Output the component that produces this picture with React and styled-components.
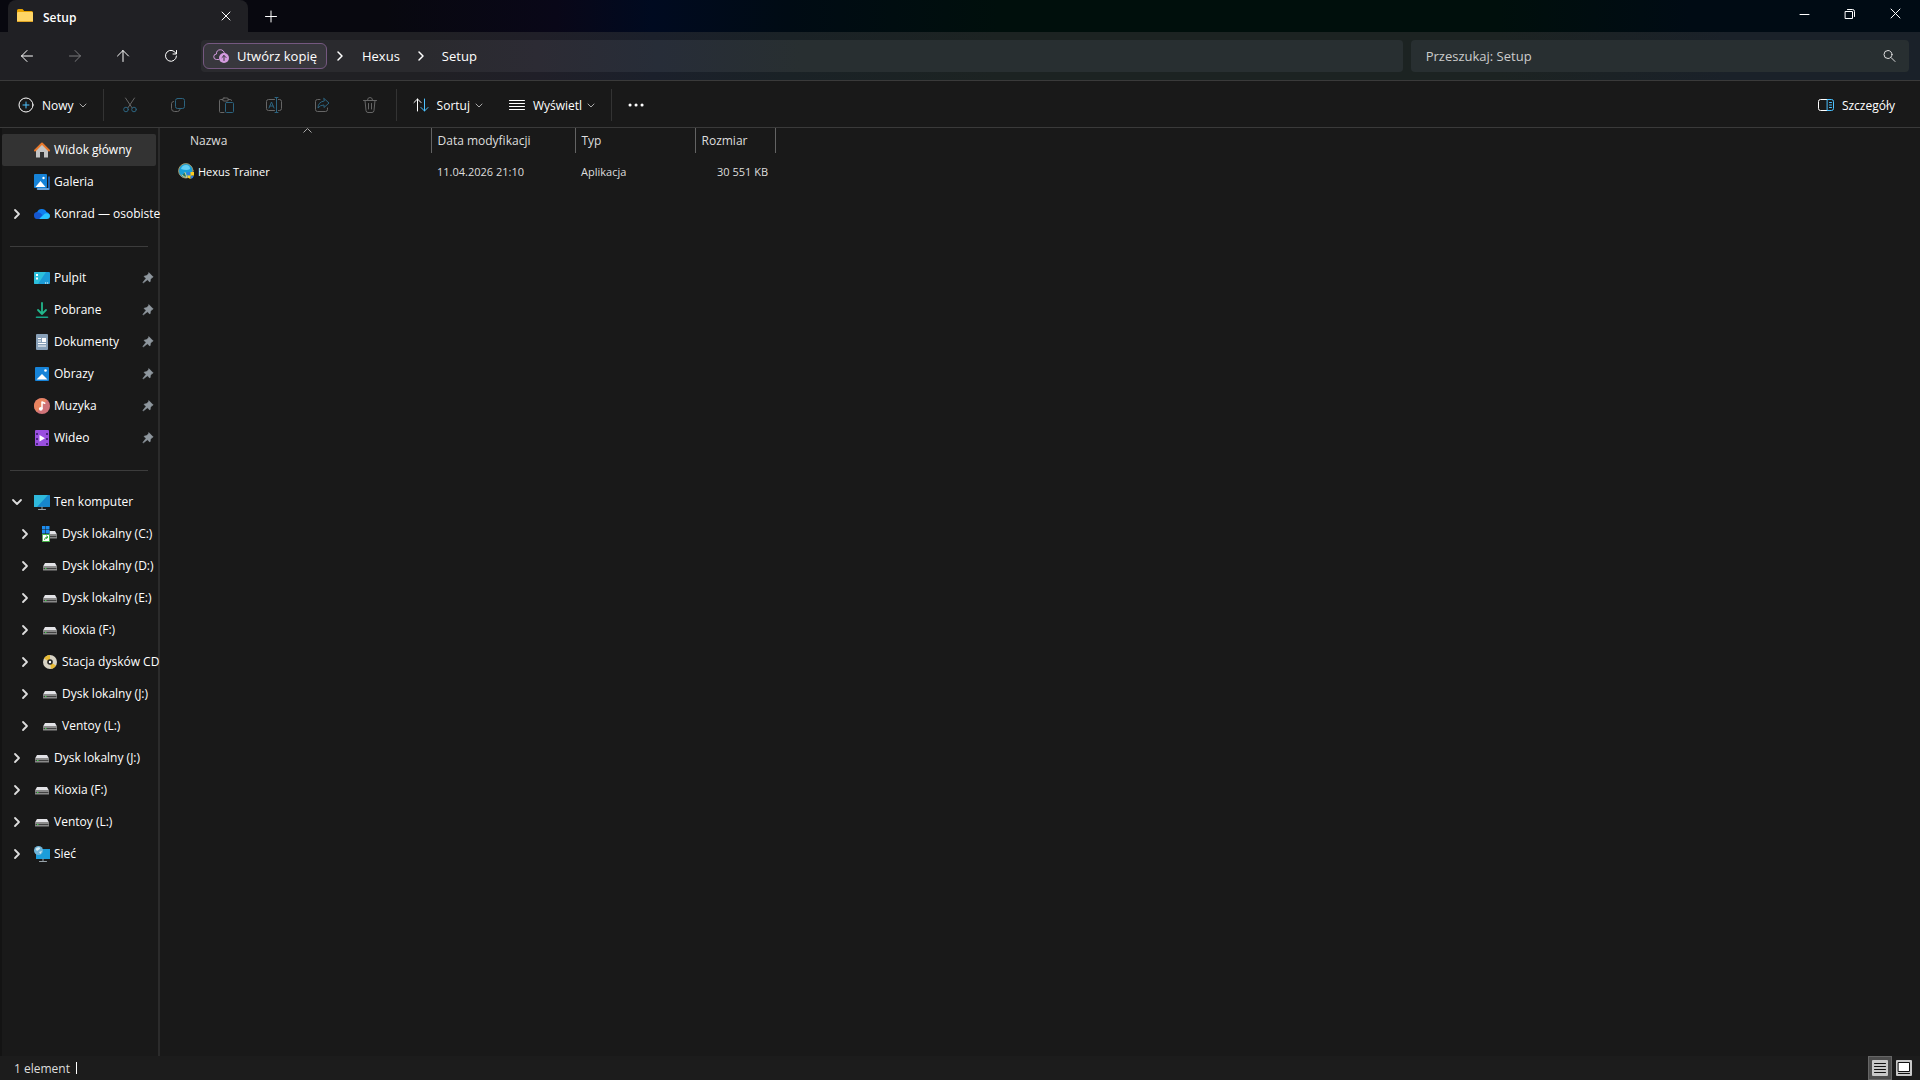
import styled, { createGlobalStyle } from "styled-components";

const GlobalStyle = createGlobalStyle`
  * {
    box-sizing: border-box;
  }

  body {
    margin: 0;
    background: #191919;
    color: #fff;
    font-family: "Open Sans", "Noto Sans", sans-serif;
    font-size: 12px;
  }

  button,
  input {
    font: inherit;
    color: inherit;
  }
`;

const Window = styled.div`
  display: flex;
  flex-direction: column;
  height: 100vh;
  overflow: hidden;
`;

const TitleBar = styled.header`
  display: flex;
  height: 32px;
  padding-left: 8px;
  background: linear-gradient(90deg, #08080f 0%, #08080f 20%, #090718 29%, #000a20 34%, #000b14 41%, #000f0c 52%, #000f0c 78%, #000b14 88%, #000b14 100%);
`;

const WindowTab = styled.div`
  display: flex;
  align-items: center;
  width: 240px;
  padding: 0 6px 0 9px;
  border-radius: 8px 8px 0 0;
  background: #202024;
`;

const TabTitle = styled.span`
  flex: 1;
  margin-left: 10px;
  padding-top: 2px;
  font-weight: 600;
`;

const PlainButton = styled.button`
  display: flex;
  align-items: center;
  justify-content: center;
  width: ${(props) => props.$width || 32}px;
  height: ${(props) => props.$height || 32}px;
  padding: 0;
  border: 0;
  background: none;
  opacity: ${(props) => (props.disabled ? 0.4 : 1)};
`;

const WindowButtons = styled.div`
  display: flex;
  margin-left: auto;
`;

const NavBar = styled.nav`
  display: flex;
  align-items: center;
  height: 49px;
  padding: 0 11px 0 3px;
  border-bottom: 1px solid #3a3a3a;
  background: linear-gradient(90deg, #202024 0%, #202024 22%, #201f28 28%, #1b202b 34%, #1a2226 41%, #1c2322 52%, #1c2322 78%, #1a2129 90%, #1a2129 100%);
`;

const AddressBar = styled.div`
  display: flex;
  flex: 28;
  align-items: center;
  height: 32px;
  margin-left: 6px;
  padding-left: 2px;
  border-radius: 4px;
  background: linear-gradient(90deg, #2a2a2e 0%, #2a2a2e 18%, #2c2b34 28%, #272d38 38%, #282f31 50%, #282f31 100%);
  font-size: 13px;
`;

const CopyButton = styled.button`
  display: flex;
  align-items: center;
  gap: 8px;
  height: 26px;
  padding: 0 9px;
  border: 1px solid #755880;
  border-radius: 6px;
  background: #38373d;
`;

const Crumb = styled.a`
  padding: 0 8px;
  color: #fff;
  text-decoration: none;
`;

const SearchBox = styled.label`
  display: flex;
  flex: 11;
  align-items: center;
  height: 32px;
  margin-left: 8px;
  padding: 0 12px 0 15px;
  border-radius: 4px;
  background: #282f31;
`;

const SearchInput = styled.input`
  flex: 1;
  min-width: 0;
  padding: 0;
  border: 0;
  outline: 0;
  background: none;
  font-size: 13px;

  &::placeholder {
    color: #ccc;
    opacity: 1;
  }
`;

const CommandBar = styled.div`
  display: flex;
  align-items: center;
  height: 47px;
  padding: 2px 8px 0;
  border-bottom: 1px solid #3a3a3a;
`;

const CommandButton = styled.button`
  display: flex;
  align-items: center;
  height: 32px;
  margin-right: 4px;
  padding: 0 10px;
  border: 0;
  background: none;
  font-weight: 500;
`;

const CommandLabel = styled.span`
  margin: 0 3px 0 8px;
`;

const CommandDivider = styled.span`
  width: 1px;
  height: 32px;
  margin-left: ${(props) => props.$before || 0}px;
  margin-right: ${(props) => props.$after || 0}px;
  background: #333;
`;

const Details = styled.div`
  margin-left: auto;
`;

const Body = styled.div`
  display: flex;
  flex: 1;
  min-height: 0;
`;

const Sidebar = styled.aside`
  width: 160px;
  padding-top: 6px;
  border-left: 2px solid #131313;
  border-right: 2px solid #2b2b2b;
`;

const TreeRow = styled.a`
  display: flex;
  align-items: center;
  height: 32px;
  margin-right: 2px;
  padding-left: ${(props) => (props.$nested ? 17 : 9)}px;
  padding-right: 2px;
  border-radius: 2px;
  background: ${(props) => (props.$active ? "#333" : "none")};
  color: #fff;
  text-decoration: none;
  white-space: nowrap;

  svg {
    flex: none;
  }
`;

const Arrow = styled.span`
  display: flex;
  flex: none;
  justify-content: center;
  width: 12px;
  margin-right: 11px;
`;

const RowLabel = styled.span`
  flex: 1;
  min-width: 0;
  margin-left: 4px;
  padding-bottom: 2px;
`;

const TreeDivider = styled.hr`
  height: 1px;
  margin: 16px 10px 15px 8px;
  border: 0;
  background: #3c3c3c;
`;

const Main = styled.main`
  flex: 1;
`;

const FileTable = styled.table`
  border-collapse: collapse;
  table-layout: fixed;
  width: 615px;
`;

const HeadCell = styled.th`
  position: relative;
  width: ${(props) => props.$width}px;
  height: 25px;
  padding: 0 0 0 ${(props) => props.$indent || 6}px;
  border-right: 1px solid #636363;
  color: #dedede;
  font-weight: 400;
  text-align: left;
`;

const SortMark = styled.svg`
  position: absolute;
  top: 0;
  left: calc(50% + 8px);
`;

const Cell = styled.td`
  height: 36px;
  padding: 0 7px 0 6px;
  color: ${(props) => (props.$name ? "#fff" : "#dedede")};
  font-size: 11px;
  text-align: ${(props) => (props.$right ? "right" : "left")};
`;

const FileName = styled.span`
  display: flex;
  align-items: center;
  gap: 4px;
  padding-left: 12px;
`;

const StatusBar = styled.footer`
  display: flex;
  align-items: center;
  height: 24px;
  padding: 0 4px 0 14px;
  background: #1c1c1c;
  color: #dedede;
`;

const StatusDivider = styled.span`
  width: 1px;
  height: 12px;
  margin-left: 6px;
  background: #fff;
`;

const ViewButtons = styled.div`
  display: flex;
  margin-left: auto;
`;

const ViewButton = styled.button`
  display: flex;
  align-items: center;
  justify-content: center;
  width: 24px;
  height: 24px;
  padding: 0;
  border: 1px solid ${(props) => (props.$active ? "#666" : "transparent")};
  background: ${(props) => (props.$active ? "#4d4d4d" : "none")};
`;

const Glyph = ({ size = 16, color = "#fff", children }) => (
  <svg width={size} height={size} viewBox={`0 0 ${size} ${size}`} fill="none" stroke={color} strokeLinecap="round" strokeLinejoin="round" aria-hidden="true">
    {children}
  </svg>
);

const Chevron = ({ down, color = "#ddd", width = 1.5 }) => (
  <Glyph size={12} color={color}>
    <path d={down ? "M2 4l4 4 4-4" : "M4 2l4 4-4 4"} strokeWidth={width} />
  </Glyph>
);

const MenuArrow = () => (
  <Glyph size={12} color="#aaa">
    <path d="M3 5l3 3 3-3" />
  </Glyph>
);

const FolderIcon = () => (
  <Glyph>
    <path d="M0 2.500q0-1.500 1.500-1.500h4l1.700 2H14.500q1.500 0 1.500 1.500V12H0z" fill="#e8a200" stroke="none" />
    <rect y="4" width="16" height="10" rx="1.200" fill="#ffd566" stroke="none" />
    <path d="M.5 13.500h15" stroke="#e0a526" />
  </Glyph>
);

const HomeIcon = () => (
  <Glyph>
    <path d="M2 8l6-6 6 6v7.500h-4V10H6v5.500H2z" fill="#c4c4c4" stroke="none" />
    <path d="M1 8.500l7-7 7 7" stroke="#e8792c" strokeWidth="2" />
  </Glyph>
);

const GalleryIcon = () => (
  <Glyph>
    <path d="M3.500 15h11.500V2.500" stroke="#1b5fae" strokeWidth="2" strokeLinecap="butt" />
    <path d="M3.500 15h11" stroke="#7fb6e8" strokeWidth="1.500" />
    <rect width="13" height="14" rx="1" fill="#1683d8" stroke="none" />
    <path d="M1.500 13l5-6 5 6z" fill="#fff" stroke="none" />
    <circle cx="9.500" cy="4" r="1.200" fill="#fff" stroke="none" />
  </Glyph>
);

const PictureIcon = () => (
  <Glyph>
    <rect x="1" y="1" width="14" height="14" rx="1" fill="#1683d8" stroke="none" />
    <path d="M2.500 13.500L8 8l5.500 5.500z" fill="#fff" stroke="none" />
    <circle cx="11.500" cy="4.500" r="1.300" fill="#fff" stroke="none" />
  </Glyph>
);

const CloudIcon = () => (
  <Glyph>
    <path d="M3.500 13A3.500 3.500 0 0 1 3 6.200 5.200 5.200 0 0 1 12.600 6 3.600 3.600 0 0 1 12.500 13z" fill="#0f7ff0" stroke="none" />
    <path d="M5 13l6-5.500q5-.8 5 2.500 0 3-3.500 3z" fill="#28c2ff" stroke="none" />
    <path d="M3 6.300q3-.8 5.500 2.700L5 13H3.500Q0 13 0 9.500T3 6.300z" fill="#1657d0" stroke="none" />
  </Glyph>
);

const DesktopIcon = () => (
  <Glyph>
    <rect y="2" width="16" height="12" rx="1" fill="#1b9bd7" stroke="none" />
    <path d="M0 3q0-1 1-1h11L4 14H1q-1 0-1-1z" fill="#2cc0dc" stroke="none" />
    <path d="M2 4h2v2H2zM2 7.500h2v2H2zM11 12.500h1.200v1H11zM13 12.500h1.200v1H13z" fill="#fff" stroke="none" />
  </Glyph>
);

const DownloadIcon = () => (
  <Glyph>
    <path d="M8 1v11M4 8l4 4 4-4" stroke="#22b78c" strokeWidth="1.800" />
    <path d="M2.500 15.200h11" stroke="#17a589" strokeWidth="1.600" />
  </Glyph>
);

const DocumentIcon = () => (
  <Glyph>
    <rect x="2" width="12" height="16" rx="1" fill="#88a0b8" stroke="none" />
    <path d="M4 4.500h3M4 7h3M4 9.500h8M4 12h8" stroke="#fff" strokeLinecap="butt" />
    <path d="M8 4h4v4H8z" fill="#fff" stroke="none" />
  </Glyph>
);

const MusicIcon = () => (
  <Glyph>
    <circle cx="8" cy="8" r="8" fill="#d07378" stroke="none" />
    <path d="M0 8a8 8 0 0 1 13-6L3 14A8 8 0 0 1 0 8z" fill="#e8845f" stroke="none" />
    <circle cx="6.800" cy="10.800" r="1.900" fill="#fff" stroke="none" />
    <path d="M8 10.500V4l2.800 1.200" stroke="#fff" strokeWidth="1.500" />
  </Glyph>
);

const VideoIcon = () => (
  <Glyph>
    <rect x="1" width="14" height="16" rx="1" fill="#9a4fe0" stroke="none" />
    <path d="M3 3v12M13 3v12" stroke="#4a2380" strokeWidth="2" strokeDasharray="2 3" strokeLinecap="butt" />
    <path d="M5.500 5v6.500L11 8.200z" fill="#fff" stroke="none" />
  </Glyph>
);

const ComputerIcon = () => (
  <Glyph>
    <rect y="1" width="16" height="12" rx=".5" fill="#1787cd" stroke="none" />
    <path d="M0 1h14L3 13H0z" fill="#2fb9dc" stroke="none" />
    <path d="M8 13v2M4.500 15.500h7" stroke="#98a3aa" />
  </Glyph>
);

const DriveShape = () => (
  <>
    <path d="M3 5h10l2 3.500H1z" fill="#e2e2e6" stroke="none" />
    <rect x="1" y="8" width="14" height="4.500" rx=".5" fill="#8a8a8a" stroke="none" />
    <path d="M2 10.500h12" stroke="#404040" />
    <path d="M3.500 10.500h.5" stroke="#41e04b" />
  </>
);

const DriveIcon = () => (
  <Glyph>
    <DriveShape />
  </Glyph>
);

const SystemDriveIcon = () => (
  <Glyph>
    <DriveShape />
    <path d="M0 0h7.500v8H0z" fill="#191919" stroke="none" />
    <path d="M0 0h3.500v3.500H0zM4 0h3.500v3.500H4zM0 4h3.500v3.500H0zM4 4h3.500v3.500H4z" fill="#1d8df0" stroke="none" />
    <rect x=".5" y="8.500" width="7" height="7" fill="#fff" stroke="#45b549" />
    <path d="M2.500 13.500q0-2.500 3-2.500M4.500 10l1.500 1.200-1.500 1.300" stroke="#2e9f36" />
  </Glyph>
);

const DiscIcon = () => (
  <Glyph>
    <circle cx="8" cy="8" r="7" fill="#d8d3c4" stroke="none" />
    <path d="M8 8L2 4.500A7 7 0 0 1 8 1zM8 8l6 3.500A7 7 0 0 1 9 15z" fill="#e8bb35" stroke="none" />
    <circle cx="8" cy="8" r="2.800" fill="#222" stroke="none" />
    <circle cx="8" cy="8" r="1.200" fill="#fff" stroke="none" />
  </Glyph>
);

const NetworkIcon = () => (
  <Glyph>
    <path d="M2 3h14v10H2z" fill="#1c9ddb" stroke="none" />
    <path d="M9 13v2M5.500 15.500h7" stroke="#98a3aa" />
    <circle cx="4.500" cy="4.500" r="4.500" fill="#6fb4d8" stroke="none" />
    <path d="M1.500 3q2-2.500 4-1.500T3 5zM5 6l3-1-1.500 3z" fill="#d5ebf4" stroke="none" />
  </Glyph>
);

const AppIcon = () => (
  <Glyph>
    <circle cx="7.800" cy="7.800" r="7.200" fill="#189fd8" stroke="#a39768" />
    <path d="M3 6q1-4 5-4t4 4q-3 2-9 0z" fill="#63d0f5" stroke="none" />
    <path d="M4 12q2 2.500 5 2.500L7 9.500" fill="#267a65" stroke="#d8cf9a" />
    <path d="M9 9h3.500v3.500H9zM12.500 12.500H16q-.5 2.500-3.500 3.500z" fill="#2f7fe0" stroke="none" />
    <path d="M12.500 9H16v3.500h-3.500zM9 12.500h3.500V16Q9.500 15 9 12.500z" fill="#ffce1f" stroke="none" />
  </Glyph>
);

const PinIcon = () => (
  <Glyph size={12}>
    <path d="M7 .8l4.200 4.200-1.200.5L8.500 7.300 8 10 5.300 7.800 1.500 10.800.8 10.500 4 6.500 2 4.300 4.800 3.500 6.300 2z" fill="#8f979e" stroke="#8f979e" strokeWidth=".6" />
  </Glyph>
);

const pinned = [
  { name: "Pulpit", icon: DesktopIcon },
  { name: "Pobrane", icon: DownloadIcon },
  { name: "Dokumenty", icon: DocumentIcon },
  { name: "Obrazy", icon: PictureIcon },
  { name: "Muzyka", icon: MusicIcon },
  { name: "Wideo", icon: VideoIcon },
];

const devices = [
  { name: "Dysk lokalny (C:)", icon: SystemDriveIcon, nested: true },
  { name: "Dysk lokalny (D:)", icon: DriveIcon, nested: true },
  { name: "Dysk lokalny (E:)", icon: DriveIcon, nested: true },
  { name: "Kioxia (F:)", icon: DriveIcon, nested: true },
  { name: "Stacja dysków CD", icon: DiscIcon, nested: true },
  { name: "Dysk lokalny (J:)", icon: DriveIcon, nested: true },
  { name: "Ventoy (L:)", icon: DriveIcon, nested: true },
  { name: "Dysk lokalny (J:)", icon: DriveIcon },
  { name: "Kioxia (F:)", icon: DriveIcon },
  { name: "Ventoy (L:)", icon: DriveIcon },
  { name: "Sieć", icon: NetworkIcon },
];

const TreeItem = ({ name, icon: Icon, arrow, active, nested, pin }) => (
  <TreeRow href="#" $active={active} $nested={nested}>
    <Arrow>{arrow && <Chevron down={arrow === "down"} width={1.8} />}</Arrow>
    <Icon />
    <RowLabel>{name}</RowLabel>
    {pin && <PinIcon />}
  </TreeRow>
);

const App = () => {
  return (
    <Window>
      <GlobalStyle />
      <TitleBar>
        <WindowTab>
          <FolderIcon />
          <TabTitle>Setup</TabTitle>
          <PlainButton aria-label="Zamknij kartę">
            <Glyph><path d="M4 4l8 8M12 4l-8 8" /></Glyph>
          </PlainButton>
        </WindowTab>
        <PlainButton aria-label="Nowa karta" $width={46}>
          <Glyph><path d="M2.500 8.500h11M8 3v11" /></Glyph>
        </PlainButton>
        <WindowButtons>
          <PlainButton aria-label="Minimalizuj" $width={46} $height={28}>
            <Glyph><path d="M3 8.500h9" /></Glyph>
          </PlainButton>
          <PlainButton aria-label="Przywróć" $width={44} $height={28}>
            <Glyph><path d="M3.500 5.500h7v7h-7zM5.500 3.500h5q2 0 2 2v5" /></Glyph>
          </PlainButton>
          <PlainButton aria-label="Zamknij" $width={48} $height={28}>
            <Glyph><path d="M3 3l9 9M12 3l-9 9" /></Glyph>
          </PlainButton>
        </WindowButtons>
      </TitleBar>

      <NavBar>
        <PlainButton aria-label="Wstecz" $width={48}>
          <Glyph><path d="M13.500 8h-11M8 2.500L2.500 8 8 13.500" /></Glyph>
        </PlainButton>
        <PlainButton aria-label="Dalej" $width={48} disabled>
          <Glyph><path d="M2.500 8h11M8 2.500L13.500 8 8 13.500" /></Glyph>
        </PlainButton>
        <PlainButton aria-label="W górę" $width={48}>
          <Glyph><path d="M8 13.500v-11M2.500 8L8 2.500 13.500 8" /></Glyph>
        </PlainButton>
        <PlainButton aria-label="Odśwież" $width={48}>
          <Glyph><path d="M13 5.500A5.500 5.500 0 1 0 13.500 8M13.500 2.500v3.500H10" /></Glyph>
        </PlainButton>
        <AddressBar>
          <CopyButton>
            <Glyph color="#d59be0">
              <path d="M5.500 11.500h-2a2.700 2.700 0 0 1 0-5.500 4 4 0 0 1 8-.5" />
              <circle cx="11" cy="10" r="5" fill="#d59be0" stroke="none" />
              <path d="M11 12.500v-5M9 9.500l2-2 2 2" stroke="#38373d" />
            </Glyph>
            Utwórz kopię
          </CopyButton>
          <PlainButton aria-label="Rozwiń" $width={27}><Chevron color="#fff" /></PlainButton>
          <Crumb href="#">Hexus</Crumb>
          <PlainButton aria-label="Rozwiń Hexus" $width={26}><Chevron color="#fff" /></PlainButton>
          <Crumb href="#">Setup</Crumb>
        </AddressBar>
        <SearchBox>
          <SearchInput type="search" placeholder="Przeszukaj: Setup" aria-label="Przeszukaj: Setup" />
          <Glyph color="#ddd"><circle cx="7" cy="6.500" r="4" /><path d="M10 9.500l4 4" /></Glyph>
        </SearchBox>
      </NavBar>

      <CommandBar>
        <CommandButton>
          <Glyph><circle cx="8" cy="8" r="7" /><path d="M8 5v6M5 8h6" stroke="#4cc2ff" /></Glyph>
          <CommandLabel>Nowy</CommandLabel>
          <MenuArrow />
        </CommandButton>
        <CommandDivider $after={2} />
        <PlainButton aria-label="Wytnij" $width={48}>
          <Glyph color="#666"><path d="M3.500 1l6.700 10M12.500 1L5.800 11" /><g stroke="#2c6480"><circle cx="4" cy="12.500" r="2.300" /><circle cx="12" cy="12.500" r="2.300" /></g></Glyph>
        </PlainButton>
        <PlainButton aria-label="Kopiuj" $width={48}>
          <Glyph color="#666"><path d="M3.500 4.500q-2 .5-2 2v5q0 3 3 3h3q2 0 2.500-2" /><rect x="5.500" y="1.500" width="9" height="10" rx="2" stroke="#2c6480" /></Glyph>
        </PlainButton>
        <PlainButton aria-label="Wklej" $width={48}>
          <Glyph color="#666"><path d="M5 2.500H2.500q-1 0-1 1v11q0 1 1 1H6M10 2.500h2.500q1 0 1 1" /><rect x="4.500" y="1" width="6" height="3" rx="1.500" /><rect x="7.500" y="5.500" width="8" height="10" rx="1" stroke="#2c6480" /></Glyph>
        </PlainButton>
        <PlainButton aria-label="Zmień nazwę" $width={48}>
          <Glyph color="#666"><path d="M8.500 2.500h-6q-2 0-2 2v7q0 2 2 2h6M12.500 2.500h1q2 0 2 2v7q0 2-2 2h-1" /><path d="M3 11l2.500-6L8 11M4 9h3M10.500 1v14M9 .5h3M9 15.500h3" stroke="#2c6480" /></Glyph>
        </PlainButton>
        <PlainButton aria-label="Udostępnij" $width={48}>
          <Glyph color="#666"><path d="M6 2.500H3.500q-2 0-2 2v8q0 2 2 2h8q2 0 2-2V11" /><path d="M10 1.500L15 6l-5 4.500V8q-4 0-6 3 0-6 6-7z" stroke="#2c6480" /></Glyph>
        </PlainButton>
        <PlainButton aria-label="Usuń" $width={48}>
          <Glyph color="#666"><path d="M1.500 3.500h13M5.500 3q0-2.500 2.500-2.500T10.500 3M3 3.500l1 10q.2 2 2 2h4q1.800 0 2-2l1-10M6.500 6.500v5.500M9.500 6.500v5.500" /></Glyph>
        </PlainButton>
        <CommandDivider $before={2} $after={6} />
        <CommandButton>
          <Glyph><path d="M4.500 14V2M1 5.500L4.500 2 8 5.500" /><path d="M11.500 2v12M8 10.500l3.500 3.500 3.500-3.500" stroke="#4cc2ff" /></Glyph>
          <CommandLabel>Sortuj</CommandLabel>
          <MenuArrow />
        </CommandButton>
        <CommandButton>
          <Glyph><path d="M.5 3.500h15M.5 6.500h15M.5 9.500h15M.5 12.500h15" /></Glyph>
          <CommandLabel>Wyświetl</CommandLabel>
          <MenuArrow />
        </CommandButton>
        <CommandDivider $after={8} />
        <PlainButton aria-label="Więcej">
          <Glyph><path d="M2 8h.1M8 8h.1M14 8h.1" strokeWidth="3" /></Glyph>
        </PlainButton>
        <Details>
          <CommandButton>
            <Glyph><path d="M9.500 2.500h-7q-2 0-2 2v7q0 2 2 2h7" /><path d="M9.500 2.500h4q2 0 2 2v7q0 2-2 2h-4zM11.500 5.500h2M11.500 8h2M11.500 10.500h2" stroke="#4cc2ff" /></Glyph>
            <CommandLabel>Szczegóły</CommandLabel>
          </CommandButton>
        </Details>
      </CommandBar>

      <Body>
        <Sidebar>
          <TreeItem name="Widok główny" icon={HomeIcon} active />
          <TreeItem name="Galeria" icon={GalleryIcon} />
          <TreeItem name="Konrad — osobiste" icon={CloudIcon} arrow="right" />
          <TreeDivider />
          {pinned.map((item) => (
            <TreeItem key={item.name} {...item} pin />
          ))}
          <TreeDivider />
          <TreeItem name="Ten komputer" icon={ComputerIcon} arrow="down" />
          {devices.map((item, index) => (
            <TreeItem key={index} {...item} arrow="right" />
          ))}
        </Sidebar>
        <Main>
          <FileTable>
            <thead>
              <tr>
                <HeadCell $width={271} $indent={30}>
                  Nazwa
                  <SortMark width="9" height="5" fill="none" stroke="#aaa"><path d="M.5 4.500l4-4 4 4" /></SortMark>
                </HeadCell>
                <HeadCell $width={144}>Data modyfikacji</HeadCell>
                <HeadCell $width={120}>Typ</HeadCell>
                <HeadCell $width={80}>Rozmiar</HeadCell>
              </tr>
            </thead>
            <tbody>
              <tr>
                <Cell $name><FileName><AppIcon />Hexus Trainer</FileName></Cell>
                <Cell>11.04.2026 21:10</Cell>
                <Cell>Aplikacja</Cell>
                <Cell $right>30 551 KB</Cell>
              </tr>
            </tbody>
          </FileTable>
        </Main>
      </Body>

      <StatusBar>
        1 element
        <StatusDivider />
        <ViewButtons>
          <ViewButton aria-label="Szczegóły" $active>
            <Glyph><rect width="16" height="16" rx="1" fill="#c8c8c8" stroke="none" /><path d="M2.500 3.500h11M2.500 6.500h11M2.500 9.500h11M2.500 12.500h11" stroke="#111" /></Glyph>
          </ViewButton>
          <ViewButton aria-label="Duże ikony">
            <Glyph><rect width="16" height="16" rx="1" fill="#c8c8c8" stroke="none" /><rect x="2.500" y="2.500" width="11" height="9" fill="#fff" stroke="#111" /><path d="M2.500 13.500h11" stroke="#111" /></Glyph>
          </ViewButton>
        </ViewButtons>
      </StatusBar>
    </Window>
  );
};

export default App;
